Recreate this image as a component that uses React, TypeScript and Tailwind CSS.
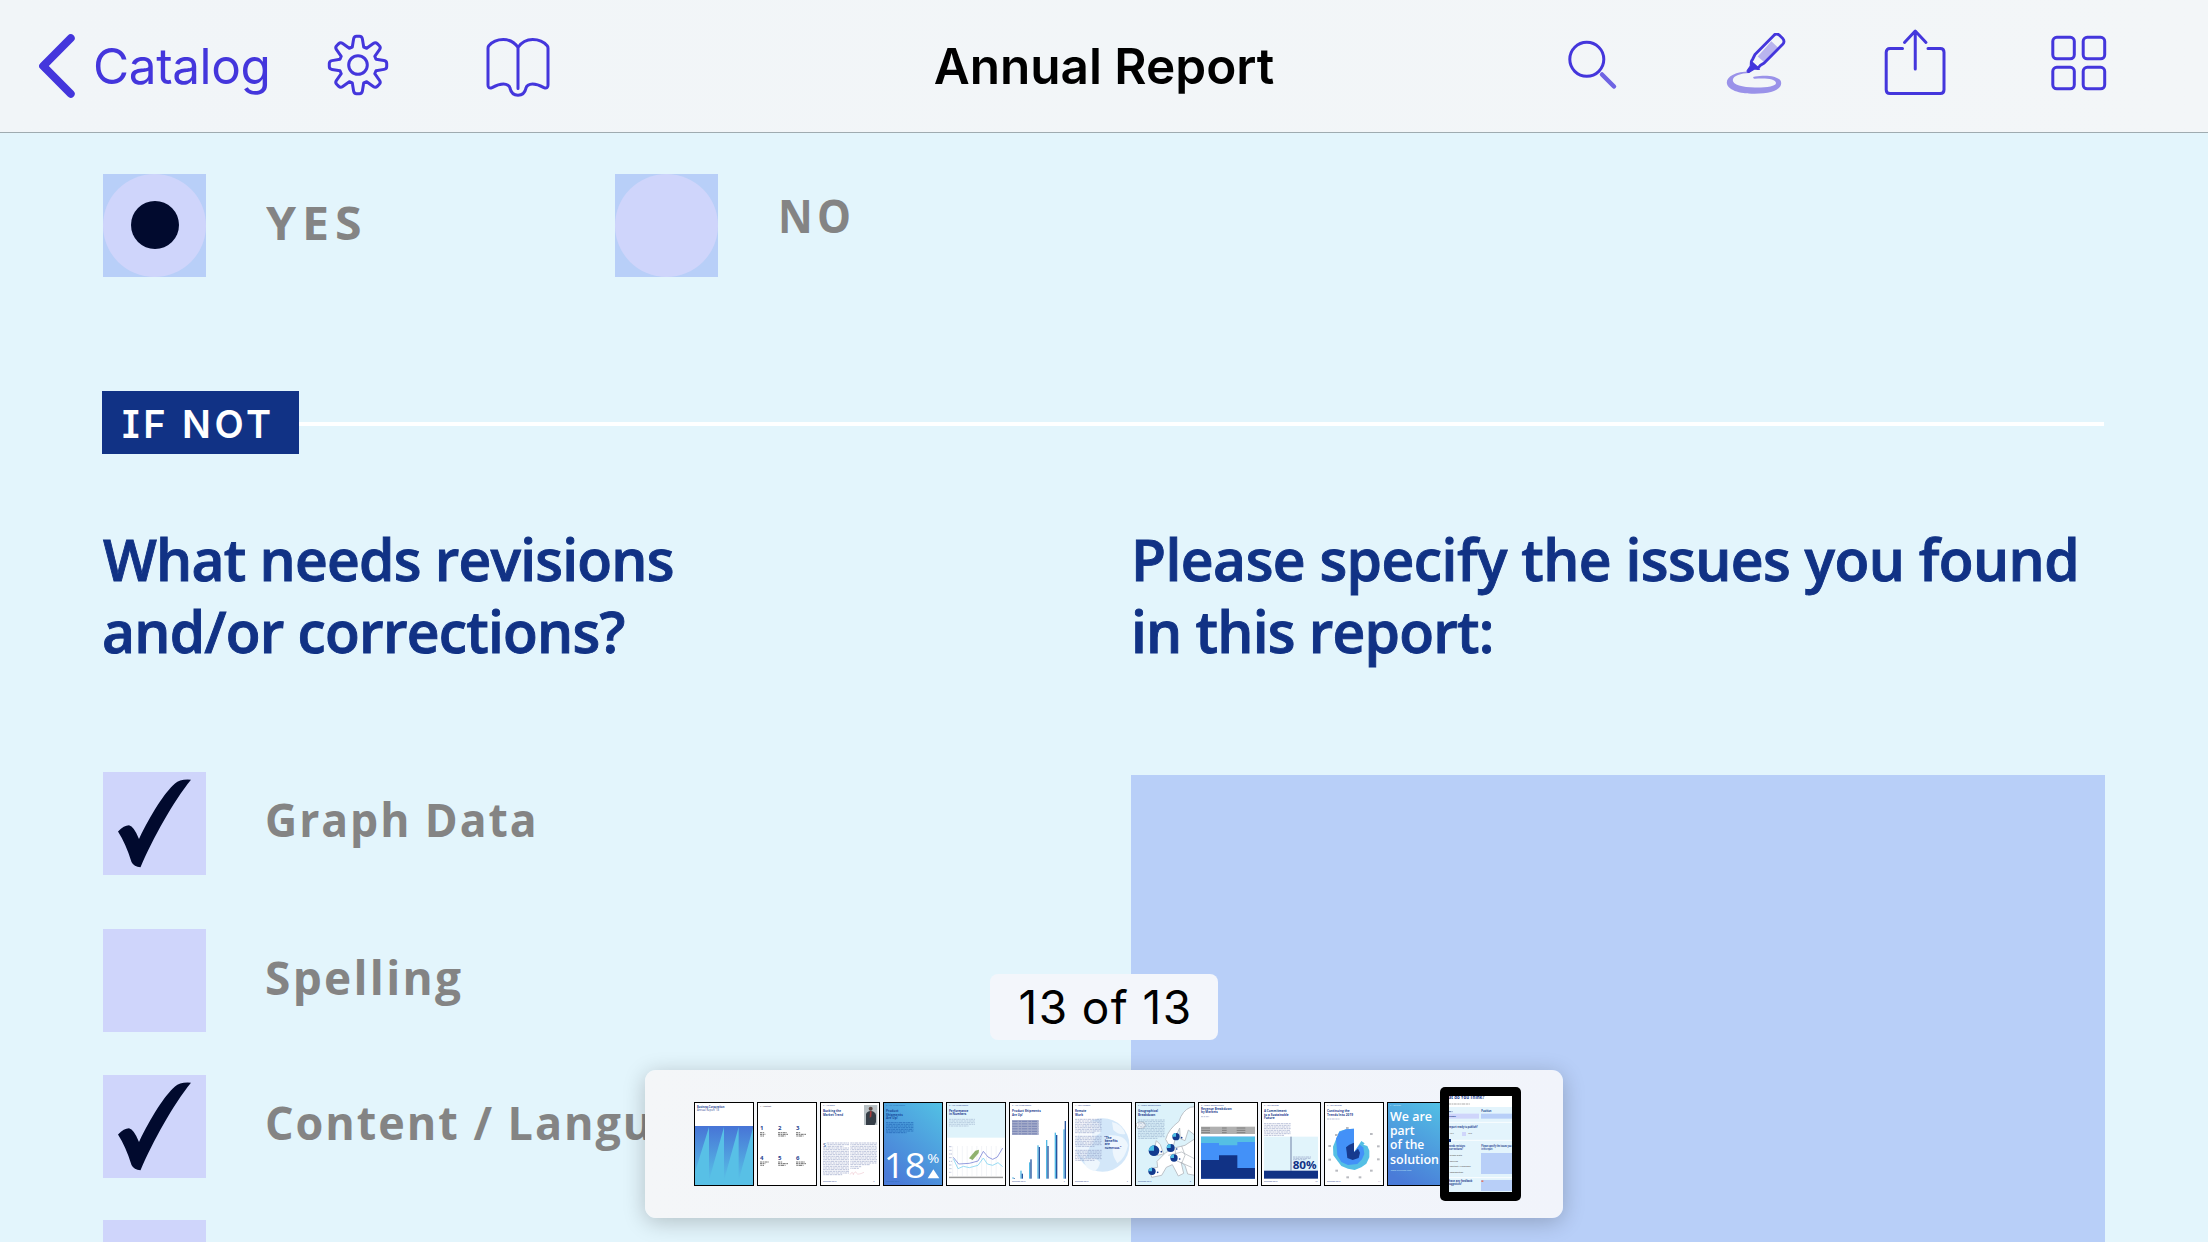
import React from "react";

const INK = "#4436dc";
const NAVY = "#113285";

/* ---------- toolbar icons ---------- */

function gearPath() {
  const parts: string[] = [];
  for (let i = 0; i < 8; i++) {
    const a = (i * Math.PI) / 4;
    const p = (x: number, y: number) =>
      `${(31 + x * Math.cos(a) - y * Math.sin(a)).toFixed(2)} ${(31 + x * Math.sin(a) + y * Math.cos(a)).toFixed(2)}`;
    parts.push(
      `${i === 0 ? "M" : "L"}${p(-5.7, -18)} L${p(-4.4, -26)} Q${p(-3.9, -28.7)} ${p(-1.5, -28.7)} L${p(1.5, -28.7)} Q${p(3.9, -28.7)} ${p(4.4, -26)} L${p(5.7, -18)}`
    );
  }
  return parts.join(" ") + " Z";
}

const ChevronIcon = () => (
  <svg className="h-[66px] w-[42px]" viewBox="0 0 42 66" fill="none" stroke={INK} strokeWidth="8" strokeLinecap="round" strokeLinejoin="round">
    <path d="M34.700 5.2 L7.2 33 L34.700 60.8" />
    <path d="M6.500 33 L10 29.500 L10 36.500 Z" strokeWidth="6" />
  </svg>
);

const GearIcon = () => (
  <svg className="h-[62px] w-[62px]" viewBox="0 0 62 62" fill="none" stroke={INK} strokeWidth="3" strokeLinejoin="round">
    <path d={gearPath()} />
    <circle cx="31" cy="31" r="9.3" />
  </svg>
);

const BookIcon = () => (
  <svg className="h-[62px] w-[66px]" viewBox="0 0 66 62" fill="none" stroke={INK} strokeWidth="3" strokeLinecap="round" strokeLinejoin="round">
    <path d="M33 12.5 C29.5 7.4 24 4.6 18.3 4.6 C12.3 4.6 6.8 7.3 3.8 10.8 Q3 11.8 3 13.2 V50 Q3 53.8 6.8 52.8 C10 51 13 49 18.5 49 C22 49 24.800 51.200 25 53.2 C26.200 58.500 29 60.300 33 60.300 C37 60.300 39.800 58.500 41 53.2 C41.200 51.200 44 49 47.500 49 C53 49 56 51 59.200 52.8 Q63 53.800 63 50 V13.2 Q63 11.8 62.2 10.8 C59.2 7.3 53.700 4.600 47.700 4.600 C42 4.600 36.500 7.4 33 12.5 V53.500" />
  </svg>
);

const SearchIcon = () => (
  <svg className="h-[62px] w-[62px]" viewBox="0 0 62 62" fill="none" strokeLinecap="round">
    <circle cx="21.8" cy="24.300" r="17" stroke={INK} strokeWidth="3" />
    <path d="M37 39.500 L49 51.500" stroke="#6f64e3" strokeWidth="4.500" />
  </svg>
);

const HighlighterIcon = () => (
  <svg className="h-[66px] w-[62px]" viewBox="0 0 62 66" fill="none">
    <path
      fill="#9a92e9"
      d="M25.500 38.400 C12 38.500 2.800 43 2.800 49.500 C2.800 56.800 15 60.800 30.500 60.800 C47 60.800 57.200 57 57.200 50 C57.200 44.800 48.500 42.300 38.500 42.700 C35 42.900 31.500 43.300 29.200 43.900 Q29 45.900 30.500 45.800 C41 44.700 52 45.700 52 50 C52 53.500 42 54.700 31 54.500 C18 54.200 8.500 51.500 8.800 47 C9.200 42.500 17 40.300 25.500 40 Z"
    />
    <path d="M33.700 23.500 L47.300 8.200 L54.800 15.200 L40.500 29.500 Z" fill="#b9b4ee" />
    <path d="M27.700 29.800 Q26.800 28.600 28.500 26.500 L31 21.500 L49.800 2.400 Q52.500 -0.400 55.200 2.100 L58.800 5.600 Q61.200 8.500 58.700 11.200 L40.200 30 L36.500 32.200 L33.800 35.400 Z" fill="none" stroke={INK} strokeWidth="2.800" strokeLinejoin="round" />
    <path d="M26.500 28.700 L35.300 36.300 L30.500 36 L25.200 39.300 Q22.700 39.800 23.200 37.500 L26.300 33 Z" fill={INK} stroke={INK} strokeWidth="1.200" strokeLinejoin="round" />
  </svg>
);

const ShareIcon = () => (
  <svg className="h-[70px] w-[62px]" viewBox="0 0 62 70" fill="none" stroke={INK} strokeWidth="3" strokeLinecap="round" strokeLinejoin="round">
    <path d="M18.500 20.500 H6 Q2.200 20.500 2.200 24.300 V61.700 Q2.200 65.500 6 65.500 H56.200 Q60 65.500 60 61.700 V24.300 Q60 20.500 56.200 20.500 H44" />
    <path d="M31.250 41 V3.500 M20.500 14.500 L31.250 3 L42 14.500" />
  </svg>
);

const GridIcon = () => (
  <svg className="h-[58px] w-[58px]" viewBox="0 0 58 58" fill="none" stroke={INK} strokeWidth="3">
    <rect x="2.8" y="3.3" width="21.500" height="21.500" rx="4" />
    <rect x="33.200" y="3.3" width="21.500" height="21.500" rx="4" />
    <rect x="2.800" y="33.300" width="21.500" height="21.500" rx="4" />
    <rect x="33.200" y="33.300" width="21.500" height="21.500" rx="4" />
  </svg>
);

/* ---------- form pieces ---------- */

const CheckMark = () => (
  <svg className="h-full w-full" viewBox="0 0 103 103" fill="#010a2e">
    <path d="M15 59.500 Q21 53.300 26 53.300 Q31 54.500 36 67 C48 42 62 20 72 11.500 Q77 6.800 88 7.700 C70 30 50 66 37.500 95.300 Q31 95 28.500 90 Q23 72 15 59.500 Z" />
  </svg>
);

const Radio = ({ selected = false }: { selected?: boolean }) => (
  <div className="h-[103px] w-[103px] shrink-0 bg-[#b8cff8]">
    <div className="flex h-full w-full items-center justify-center rounded-full bg-[#cfd5fb]">
      {selected && <div className="h-[48px] w-[48px] rounded-full bg-[#010a2e]" />}
    </div>
  </div>
);

const LABEL = "origin-left whitespace-nowrap font-['Open_Sans',sans-serif] text-[46px] font-bold leading-[60px] text-[#848484]";

const CheckRow = ({ label, checked, className, labelClass }: { label?: string; checked?: boolean; className?: string; labelClass?: string }) => (
  <div className={`flex items-center ${className ?? ""}`}>
    <div className="h-[103px] w-[103px] shrink-0 bg-[#cfd5fb]">{checked && <CheckMark />}</div>
    <span className={`${LABEL} ml-[59px] ${labelClass ?? ""}`}>{label}</span>
  </div>
);

/* ---------- page thumbnails ---------- */

const Lines = ({ x, y, w, n, gap = 5, color = "#8f9cc4", dash = "7 1.5 4 1.5 9 2" }: { x: number; y: number; w: number; n: number; gap?: number; color?: string; dash?: string }) => (
  <g stroke={color} strokeWidth="2.800" strokeDasharray={dash} opacity="0.65">
    {Array.from({ length: n }, (_, i) => (
      <path key={i} strokeDashoffset={i * 5} d={`M${x} ${y + i * gap} h${i === n - 1 ? w * 0.75 : w}`} />
    ))}
  </g>
);

const T = ({ x, y, s = 9, c = "#1f3f90", w = 700, len, children }: { x: number; y: number; s?: number; c?: string; w?: number; len?: number; children: React.ReactNode }) => (
  <text x={x} y={y} fontSize={s} fill={c} fontWeight={w} fontFamily="'Open Sans', sans-serif" textLength={len} lengthAdjust="spacingAndGlyphs">
    {children}
  </text>
);

const Thumb = ({ children, bg = "#fff" }: { children: React.ReactNode; bg?: string }) => (
  <svg className="h-[84px] w-[60px] shrink-0" viewBox="0 0 180 252">
    <rect width="180" height="252" fill={bg} />
    {children}
    <rect x="1.500" y="1.500" width="177" height="249" fill="none" stroke="#000" strokeWidth="3" />
  </svg>
);

const Cover = () => (
  <Thumb>
    <defs>
      <linearGradient id="cov" x1="0" y1="0" x2="0" y2="1">
        <stop offset="0" stopColor="#4774d6" />
        <stop offset="0.9" stopColor="#58c0e6" />
      </linearGradient>
    </defs>
    <T x={9} y={17} len={82}>Business Corporation</T>
    <T x={9} y={27} s={8} w={400} len={66}>Annual Report ’18</T>
    <rect x="0" y="72" width="180" height="180" fill="url(#cov)" />
    <path d="M3 210 L45 75 V235 L90 75 V235 L134 75 V235 L177 78 V252 H3 Z" fill="#58c0e6" />
  </Thumb>
);

const Contents = () => (
  <Thumb>
    <T x={9} y={15} s={6} c="#667">1 – Content</T>
    {[1, 2, 3, 4, 5, 6].map((n, i) => {
      const x = 9 + (i % 3) * 54;
      const y = 85 + Math.floor(i / 3) * 88;
      return (
        <g key={n}>
          <T x={x} y={y} s={18}>{n}</T>
          <Lines x={x} y={y + 7} w={i % 2 ? 36 : 18} n={1} color="#222" />
          <Lines x={x} y={y + 12} w={i % 3 ? 30 : 16} n={2} color="#111" />
        </g>
      );
    })}
  </Thumb>
);

const Trend = () => (
  <Thumb>
    <T x={9} y={13} s={6} w={400}>2 – Welcome</T>
    <T x={9} y={31} s={9.500} len={54}>Bucking the</T>
    <T x={9} y={41} s={9.500} len={60}>Market Trend</T>
    <rect x="132" y="9" width="40" height="60" fill="#b9c1c5" />
    <circle cx="152" cy="20" r="6" fill="#5b4540" />
    <path d="M138 69 V36 Q141 28 152 27 Q164 28 168 38 V60 L164 69 Z" fill="#353e47" />
    <path d="M150 28 L155 28 L154 44 L149 47 Z" fill="#a83c3c" />
    <T x={9} y={134} s={17} w={400}>S</T>
    <Lines x={20} y={123} w={67} n={3} />
    <Lines x={9} y={138} w={78} n={17} />
    <Lines x={91} y={123} w={80} n={14} />
    <Lines x={91} y={194} w={34} n={2} />
    <path d="M90 218 q8 -14 10 0 q5 -15 10 -4 q3 6 22 -3" fill="none" stroke="#e09aaa" strokeWidth="1" />
    <T x={9} y={241} s={6} w={400}>Business 2018</T>
    <T x={160} y={241} s={6} w={400}>3</T>
  </Thumb>
);

const Eighteen = () => (
  <Thumb bg="#4a90dc">
    <defs>
      <linearGradient id="e18" x1="0.9" y1="0" x2="0.3" y2="1">
        <stop offset="0" stopColor="#52bfe4" />
        <stop offset="1" stopColor="#4a7bd8" />
      </linearGradient>
    </defs>
    <rect width="180" height="252" fill="url(#e18)" />
    <T x={9} y={13} s={6} c="#2a69b4" w={400}>3 – Key Performance</T>
    <T x={9} y={31} s={9.500} c="#1b4c9c">Product</T>
    <T x={9} y={41} s={9.500} c="#1b4c9c">Shipments</T>
    <T x={9} y={51} s={9.500} c="#1b4c9c">Are Up!</T>
    <Lines x={9} y={62} w={82} n={7} color="#1b5cae" />
    <text x="2" y="229" fontSize="104" fill="#fff" fontFamily="'Open Sans', sans-serif" textLength="126" lengthAdjust="spacingAndGlyphs">18</text>
    <text x="133" y="184" fontSize="40" fill="#fff" fontFamily="'Open Sans', sans-serif" textLength="36" lengthAdjust="spacingAndGlyphs">%</text>
    <path d="M134 229 L151 202 L169 229 Z" fill="#fff" />
    <T x={9} y={241} s={6} c="#2a69b4" w={400}>Business 2018</T>
  </Thumb>
);

const Performance = () => (
  <Thumb>
    <rect width="180" height="107" fill="#dff3fb" />
    <T x={9} y={13} s={6} w={400}>3 – Key Performance</T>
    <T x={9} y={30} s={9.500} len={58}>Performance</T>
    <T x={9} y={40} s={9.500} len={52}>in Numbers</T>
    <Lines x={9} y={52} w={78} n={5} color="#9fb3cf" />
    {Array.from({ length: 11 }, (_, i) => (
      <path key={i} d={`M${20 + i * 14.500} 132 V222`} stroke="#e4e8ee" strokeWidth="1.500" />
    ))}
    <Lines x={9} y={134} w={9} n={8} gap={11} />
    <path d="M22 166 L38 186 L70 184 L96 177 L112 148 L126 165 L140 172 L154 165 L170 138" fill="none" stroke="#8089d8" strokeWidth="2.500" />
    <path d="M22 170 L36 200 L52 193 L70 197 L96 190 L112 168 L124 186 L140 190 L156 182 L170 194" fill="none" stroke="#84d4f0" strokeWidth="2.500" />
    <path d="M69 169 L88 146 L99 143 L98 153 L80 174 Z" fill="#7da456" opacity="0.85" />
    <rect x="9" y="224" width="162" height="4.500" fill="#999" />
  </Thumb>
);

const Shipments = () => (
  <Thumb>
    <T x={9} y={13} s={6} w={400}>3 – Key Performance</T>
    <T x={9} y={31} s={9.500} len={86}>Product Shipments</T>
    <T x={9} y={41} s={9.500} len={32}>Are Up!</T>
    <rect x="9" y="54" width="80" height="45" fill="#a7aecb" />
    {[0, 1, 2, 3, 4, 5].map((i) => (
      <path key={i} d={`M10 ${58 + i * 7.500} h78`} stroke="#6c7ab0" strokeWidth="2.500" strokeDasharray="16 3 8 2" />
    ))}
    {[[10, 226, 228], [34, 206, 215], [60, 181, 172], [85, 130, 135], [111, 114, 132], [137, 92, 99], [163, 82, 57]].map(([x, a, b]) => (
      <g key={x}>
        <rect x={x} y={a} width="4" height={230 - a} fill="#54b9e4" />
        <rect x={x + 4} y={b} width="4" height={230 - b} fill="#27559f" />
      </g>
    ))}
    <T x={9} y={241} s={6} w={400}>Business 2018</T>
    <T x={164} y={241} s={6} w={400}>6</T>
  </Thumb>
);

const RemoteWork = () => (
  <Thumb>
    <circle cx="92" cy="129" r="80" fill="#d3e7f9" />
    <path d="M60 58 Q88 54 84 80 Q92 92 74 100 L60 130 Q42 140 24 108 Q14 90 60 58 Z M36 172 Q60 160 84 180 Q82 200 66 208 Q36 200 36 172 Z M120 60 Q150 66 160 96 Q140 100 124 84 Z M110 100 Q160 96 168 130 Q160 170 136 184 Q120 160 122 142 Q104 130 110 100 Z" fill="#eef6fd" />
    <path d="M12 129 Q8 70 60 56 L60 110 L40 175 Q14 160 12 129 Z" fill="#fff" opacity="0.6" />
    <T x={9} y={13} s={6} w={400}>4 – Our Network</T>
    <T x={9} y={31} s={9.500} len={34}>Remote</T>
    <T x={9} y={41} s={9.500} len={24}>Work</T>
    <Lines x={9} y={52} w={80} n={9} />
    <Lines x={9} y={103} w={80} n={7} />
    <Lines x={9} y={145} w={80} n={7} />
    <T x={97} y={110} s={9.500}>“The</T>
    <T x={98} y={120} s={9.500}>benefits</T>
    <T x={98} y={130} s={9.500}>are</T>
    <T x={98} y={141} s={9.500} len={50}>numerous.”</T>
    <T x={9} y={241} s={6} w={400}>Business 2018</T>
    <T x={164} y={241} s={6} w={400}>7</T>
  </Thumb>
);

const Geographic = () => (
  <Thumb bg="#dcf2fa">
    <g fill="#fff" stroke="#b3b8be" strokeWidth="2.500" strokeLinejoin="round">
      <path d="M3 66 Q12 56 28 62 Q36 70 26 78 L8 80 Z" />
      <path d="M92 112 Q100 82 132 58 Q142 26 166 16 L180 14 V100 L160 84 L150 116 L136 110 L134 78 L122 104 L116 130 L100 126 Z" />
      <path d="M64 116 L76 128 L86 156 L66 160 L58 140 Z" />
      <path d="M66 178 L92 152 L118 138 L150 130 L180 110 V220 L158 216 L150 190 L138 180 L146 214 L130 222 L112 188 L94 196 L80 220 L50 226 L44 200 L68 196 Z" />
    </g>
    <path d="M100 160 L140 150 L178 170 M120 140 L124 176 L170 196 M140 132 L150 160 L140 184" fill="none" stroke="#aab0b6" strokeWidth="2" />
    <T x={9} y={13} s={6} w={400}>5 – Global Opportunities</T>
    <T x={9} y={31} s={9.500} len={60}>Geographical</T>
    <T x={9} y={41} s={9.500} len={52}>Breakdown</T>
    <Lines x={9} y={54} w={80} n={12} color="#8fa9c8" />
    {[[123, 104, 11], [57, 146, 16], [107, 138, 12], [117, 168, 11], [51, 208, 11]].map(([x, y, r]) => (
      <g key={x}>
        <circle cx={x} cy={y} r={r} fill="#123a8e" />
        <path d={`M${x} ${y} V${y - r} A${r} ${r} 0 0 0 ${x - r} ${y} Z`} fill="#4fc0e6" />
        <circle cx={x + r + 6} cy={y + 3} r="2.500" fill="#123a8e" />
      </g>
    ))}
    <T x={9} y={241} s={6} w={400}>Business 2018</T>
    <T x={164} y={241} s={6} w={400}>8</T>
  </Thumb>
);

const Revenue = () => (
  <Thumb>
    <T x={9} y={13} s={6} w={400}>5 – Global Opportunities</T>
    <T x={9} y={24} s={9.500} len={92}>Revenue Breakdown</T>
    <T x={9} y={34} s={9.500} len={50}>by Markets</T>
    <Lines x={9} y={44} w={34} n={1} />
    <rect x="9" y="74" width="162" height="22" fill="#b0b0b0" />
    {[0, 1, 2].map((i) => (
      <path key={i} d={`M10 ${78 + i * 7} h160`} stroke="#666" strokeWidth="2" strokeDasharray="26 36 14 30" />
    ))}
    <rect x="9" y="104" width="162" height="126" fill="#4391f8" />
    <path d="M9 104 H171 V120 H118 V130 H63 V123 H9 Z" fill="#55bfe4" />
    <path d="M9 174 H63 V160 H118 V198 H171 V230 H9 Z" fill="#113285" />
  </Thumb>
);

const Commitment = () => (
  <Thumb>
    <T x={9} y={13} s={6} w={400}>6 – The Solution</T>
    <T x={9} y={31} s={9.500} len={68}>A Commitment</T>
    <T x={9} y={41} s={9.500} len={74}>to a Sustainable</T>
    <T x={9} y={52} s={9.500} len={32}>Future</T>
    <Lines x={9} y={65} w={80} n={8} />
    <rect x="9" y="104" width="162" height="102" fill="#e1f4fb" />
    <rect x="88" y="104" width="4" height="102" fill="#8d9dbb" />
    <rect x="9" y="206" width="162" height="24" fill="#113285" />
    <Lines x={96} y={165} w={54} n={3} gap={4} />
    <T x={95} y={202} s={29} c={NAVY} len={72}>80%</T>
    <T x={9} y={241} s={6} w={400}>Business 2018</T>
    <T x={162} y={241} s={6} w={400}>10</T>
  </Thumb>
);

const Radial = () => (
  <Thumb>
    <T x={9} y={13} s={6} w={400}>6 – The Solution</T>
    <T x={9} y={31} s={9.500} len={68}>Continuing the</T>
    <T x={9} y={41} s={9.500} len={78}>Trends Into 2019</T>
    <Lines x={9} y={51} w={50} n={1} />
    <path d="M90 151 L112 117 L122 124 L118 128 L130 132 L136 146 L136 166 L127 185 L112 196 L92 204 L72 200 L52 192 L40 176 L28 160 L27 134 L36 112 L46 88 L66 82 L90 80 Z" fill="#55bfe4" />
    <path d="M90 151 L107 128 L118 136 L121 156 L114 172 L100 186 L72 189 L52 180 L40 160 L38 134 L36 110 L46 90 L66 82 L90 80 Z" fill="#4391f8" />
    <path d="M90 151 L102 140 L108 152 L104 168 L86 174 L70 168 L68 150 L66 136 L76 128 L90 122 Z" fill="#173a8e" />
    {[[70, 78], [142, 96], [163, 133], [163, 172], [142, 206], [108, 226], [71, 226], [38, 206], [17, 173], [17, 132], [37, 99]].map(([x, y]) => (
      <rect key={`${x}-${y}`} x={x - 4} y={y - 3} width="8" height="6" fill="#b9bbc0" />
    ))}
    <T x={9} y={241} s={6} w={400}>Business 2018</T>
    <T x={162} y={241} s={6} w={400}>11</T>
  </Thumb>
);

const Solution = () => (
  <Thumb>
    <defs>
      <linearGradient id="sol" x1="0.800" y1="0" x2="0.400" y2="1">
        <stop offset="0" stopColor="#52bfe4" />
        <stop offset="1" stopColor="#4a7bd8" />
      </linearGradient>
    </defs>
    <rect width="180" height="252" fill="url(#sol)" />
    <T x={9} y={13} s={6} c="#d6ecfa" w={400}>6 – Solution</T>
    <T x={9} y={58} s={40} c="#fff" w={600} len={126}>We are</T>
    <T x={9} y={100} s={40} c="#fff" w={600} len={74}>part</T>
    <T x={9} y={142} s={40} c="#fff" w={600} len={103}>of the</T>
    <T x={9} y={185} s={40} c="#fff" w={600} len={147}>solution</T>
    <T x={11} y={207} s={7} c="#bfe0f7" w={400}>www.business.com</T>
  </Thumb>
);

const CurrentPage = () => (
  <div className="-ml-[10px] h-[114px] w-[81px] shrink-0 rounded-[5px] bg-black p-[9px]">
    <svg className="h-[96px] w-[63px]" viewBox="0 0 189 288">
      <rect width="189" height="288" fill="#fff" />
      <T x={-22} y={9} s={14} len={128}>What do You Think?</T>
      <Lines x={0} y={24} w={84} n={1} color="#777" />
      <rect x="0" y="33" width="189" height="255" fill="#e3f4fc" />
      <Lines x={0} y={47} w={14} n={1} color={NAVY} />
      <T x={97} y={49} s={7.500}>Position</T>
      <rect x="0" y="53" width="90" height="15" fill="#cfd5fb" />
      <T x={0} y={63} s={7}>Name</T>
      <rect x="96" y="53" width="93" height="15" fill="#b8cff8" />
      <path d="M0 79 H189 M6 133 H189 M0 245 H189" stroke="#fff" strokeWidth="2.500" />
      <T x={0} y={95} s={8} len={86}>report ready to publish?</T>
      <T x={2} y={114} s={7} c="#888">YES</T>
      <rect x="39" y="108" width="12" height="12" fill="#cfd5fb" />
      <T x={58} y={114} s={7} c="#888">NO</T>
      <rect x="0" y="129" width="6" height="9" fill={NAVY} />
      <T x={0} y={152} s={7.500} len={48}>needs revisions</T>
      <T x={0} y={161} s={7.500} len={42}>corrections?</T>
      <T x={97} y={152} s={7.500} len={90}>Please specify the issues you</T>
      <T x={97} y={161} s={7.500} len={34}>in this report:</T>
      <T x={2} y={180} s={6.500} c="#777">Graph Data</T>
      <T x={2} y={197} s={6.500} c="#777">Spelling</T>
      <T x={2} y={213} s={6.500} c="#777">Content / Language</T>
      <T x={2} y={231} s={6.500} c="#777">Composition</T>
      <rect x="96" y="171" width="93" height="63" fill="#b8cff8" />
      <T x={0} y={258} s={7.500} len={70}>have any feedback</T>
      <T x={0} y={266} s={7.500} len={38}>suggestions?</T>
      <rect x="96" y="252" width="93" height="33" fill="#b8cff8" />
      <rect x="97" y="253" width="6" height="5" fill="#e07b6c" />
    </svg>
  </div>
);

/* ---------- page ---------- */

const HEADING =
  "whitespace-nowrap font-['Open_Sans',sans-serif] text-[57px] font-semibold leading-[72.3px] text-[#113285] [-webkit-text-stroke:0.9px_#113285]";

export default function App() {
  return (
    <div className="relative flex h-[1242px] w-[2208px] flex-col overflow-hidden bg-[#e3f5fc]">
      <header className="grid h-[133px] shrink-0 grid-cols-[1fr_auto_1fr] items-center border-b border-[#9fabb0] bg-[linear-gradient(90deg,#f1f5f8,#f3f6f8)] font-['Inter',sans-serif] text-[49.5px] leading-[60px]">
        <div className="flex items-center" style={{ color: INK }}>
          <div className="ml-[36px] w-[57px]"><ChevronIcon /></div>
          <span className="w-[234px] whitespace-nowrap tracking-[-0.4px]">Catalog</span>
          <div className="w-[158px] -translate-y-[1px]"><GearIcon /></div>
          <div><BookIcon /></div>
        </div>
        <h1 className="whitespace-nowrap font-semibold text-black">Annual Report</h1>
        <div className="flex items-center justify-end pr-[100px]">
          <div className="w-[159px]"><SearchIcon /></div>
          <div className="w-[160px]"><HighlighterIcon /></div>
          <div className="w-[166px] -translate-y-[3px]"><ShareIcon /></div>
          <div className="-translate-y-[3px]"><GridIcon /></div>
        </div>
      </header>

      <main className="px-[103px] pt-[40.5px]">
        <div className="flex h-[103.5px] items-start">
          <div className="flex w-[512px] items-center">
            <Radio selected />
            <span className={`${LABEL} ml-[60px] pb-[7px] scale-x-[1.05] tracking-[5.6px]`}>YES</span>
          </div>
          <Radio />
          <span className={`${LABEL} ml-[60px] mt-[11px] scale-x-[0.93] tracking-[4.5px]`}>NO</span>
        </div>

        <div className="-ml-px mt-[114px] flex h-[63px] items-center">
          <div className="flex h-full w-[197px] items-center bg-[#113285] pl-[20px] font-['Inter',sans-serif] text-[38px] font-semibold leading-[60px] tracking-[3.5px] text-white [font-feature-settings:'cv08']">
            <span className="whitespace-nowrap pt-[3px]">IF NOT</span>
          </div>
          <div className="mr-px mt-[3px] h-[4px] flex-1 bg-white" />
        </div>

        <div className="mt-[69px] grid grid-cols-[1028px_974px]">
          <section>
            <h2 className={HEADING}>
              <span className="block tracking-[-0.8px]">What needs revisions</span>
              <span className="-ml-px block tracking-[-0.8px]">and/or corrections?</span>
            </h2>
            <CheckRow className="mt-[104px]" label="Graph Data" checked labelClass="pb-[9px] scale-x-[0.967] tracking-[2px]" />
            <CheckRow className="mt-[54px]" label="Spelling" labelClass="pb-[7px] tracking-[2.3px]" />
            <CheckRow className="mt-[43px]" label="Content / Language" checked labelClass="pb-[8px] scale-x-[0.977] tracking-[2px]" />
            <CheckRow className="mt-[42px]" />
          </section>
          <section>
            <h2 className={HEADING}>
              <span className="block tracking-[-0.55px]">Please specify the issues you found</span>
              <span className="block tracking-[-0.8px]">in this report:</span>
            </h2>
            <div className="mt-[107px] h-[520px] bg-[#b8cff8]" />
          </section>
        </div>
      </main>

      <div className="absolute left-[990px] top-[974px] flex h-[66px] w-[228px] items-center justify-center rounded-[8px] bg-[#f3f6fb] font-['Inter',sans-serif] text-[46px] leading-[60px] text-black">
        <span className="-mr-[3px] whitespace-nowrap tracking-[1.4px] [word-spacing:-1px]">13 of 13</span>
      </div>

      <nav className="absolute left-[645px] top-[1070px] flex h-[148px] w-[918px] items-center gap-[3px] rounded-[11px] bg-[linear-gradient(90deg,#f4f6f8,#f1f4fb)] pl-[49px] shadow-[0_4px_22px_rgba(0,0,0,0.22)]">
        <Cover />
        <Contents />
        <Trend />
        <Eighteen />
        <Performance />
        <Shipments />
        <RemoteWork />
        <Geographic />
        <Revenue />
        <Commitment />
        <Radial />
        <Solution />
        <CurrentPage />
      </nav>
    </div>
  );
}
